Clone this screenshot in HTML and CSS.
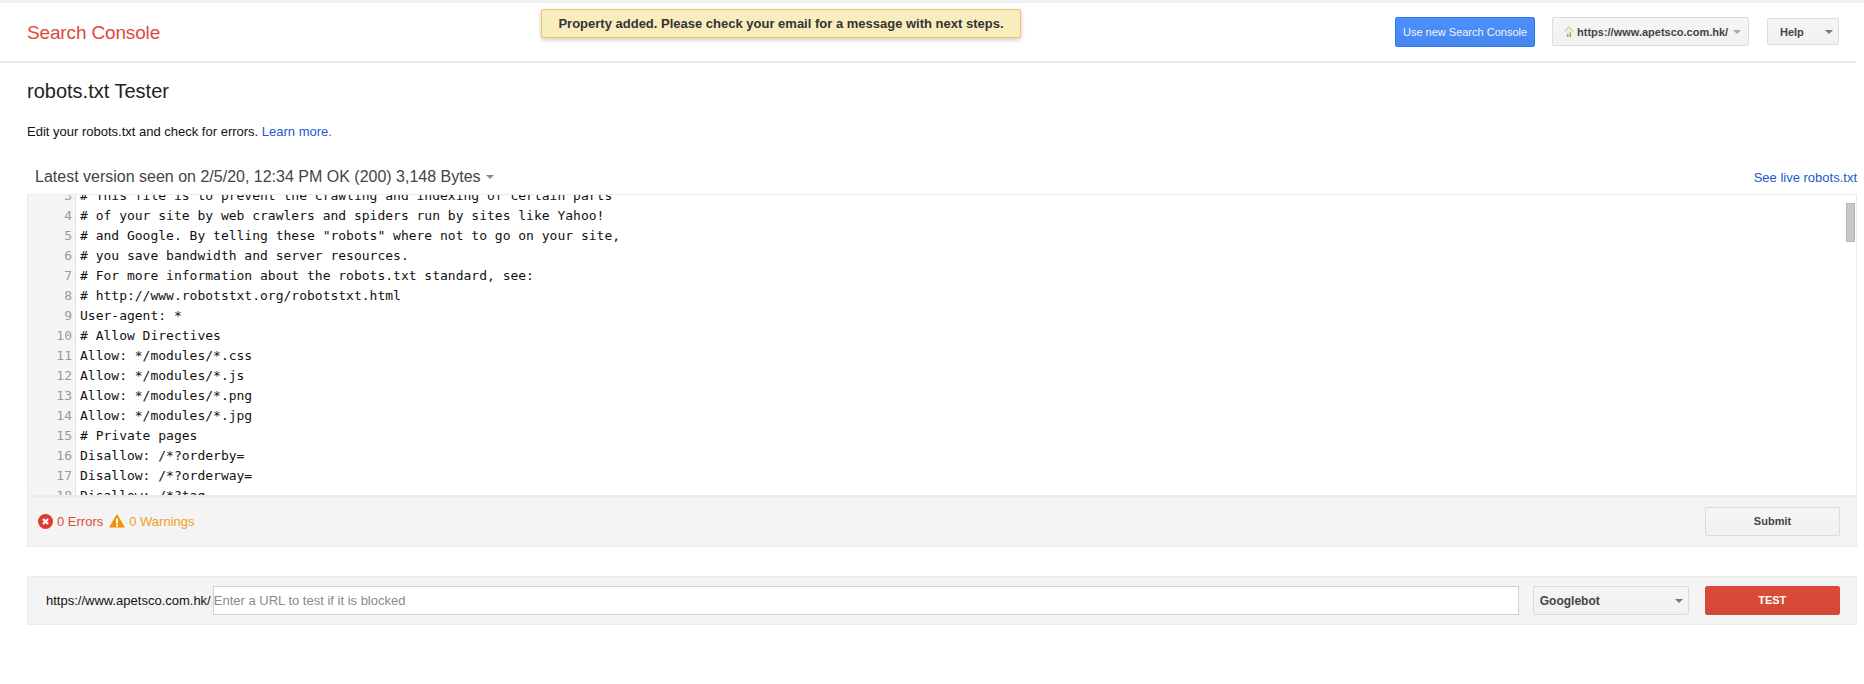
FILE: index.html
```html
<!DOCTYPE html>
<html lang="en">
<head>
<meta charset="utf-8">
<title>robots.txt Tester</title>
<link rel="stylesheet" href="styles.css">
</head>
<body>
<header class="topbar">
  <div class="brand">Search Console</div>
  <div class="notice">Property added. Please check your email for a message with next steps.</div>
  <div class="top-actions">
    <button class="btn-blue">Use new Search Console</button>
    <button class="btn-site">
      <svg class="home" width="10" height="11" viewBox="0 0 10 11"><path d="M.5 5.5 L5 1 L9.5 5.5" stroke="#b9dca4" stroke-width="1.2" fill="none"/><path d="M2 5.5V11h6V5.5L5 3Z" fill="#e4f1da"/><rect x="3" y="8" width="1.4" height="3" fill="#7dbb66"/><rect x="5.6" y="6.5" width="1.4" height="4.5" fill="#7dbb66"/></svg>
      <span>https://www.apetsco.com.hk/</span><i class="caret caret-light"></i>
    </button>
    <button class="btn-help"><span>Help</span><i class="caret"></i></button>
  </div>
</header>
<main class="page">
  <h1 class="title">robots.txt Tester</h1>
  <p class="intro">Edit your robots.txt and check for errors. <a href="#">Learn more.</a></p>
  <div class="version-row">
    <div class="version">Latest version seen on 2/5/20, 12:34 PM OK (200) 3,148 Bytes<i class="caret caret-mid"></i></div>
    <a class="live" href="#">See live robots.txt</a>
  </div>
  <section class="editor">
    <div class="code-view">
      <div class="code-lines">
        <div class="ln"><span class="no">3</span><span class="tx"># This file is to prevent the crawling and indexing of certain parts</span></div>
        <div class="ln"><span class="no">4</span><span class="tx"># of your site by web crawlers and spiders run by sites like Yahoo!</span></div>
        <div class="ln"><span class="no">5</span><span class="tx"># and Google. By telling these "robots" where not to go on your site,</span></div>
        <div class="ln"><span class="no">6</span><span class="tx"># you save bandwidth and server resources.</span></div>
        <div class="ln"><span class="no">7</span><span class="tx"># For more information about the robots.txt standard, see:</span></div>
        <div class="ln"><span class="no">8</span><span class="tx"># http://www.robotstxt.org/robotstxt.html</span></div>
        <div class="ln"><span class="no">9</span><span class="tx">User-agent: *</span></div>
        <div class="ln"><span class="no">10</span><span class="tx"># Allow Directives</span></div>
        <div class="ln"><span class="no">11</span><span class="tx">Allow: */modules/*.css</span></div>
        <div class="ln"><span class="no">12</span><span class="tx">Allow: */modules/*.js</span></div>
        <div class="ln"><span class="no">13</span><span class="tx">Allow: */modules/*.png</span></div>
        <div class="ln"><span class="no">14</span><span class="tx">Allow: */modules/*.jpg</span></div>
        <div class="ln"><span class="no">15</span><span class="tx"># Private pages</span></div>
        <div class="ln"><span class="no">16</span><span class="tx">Disallow: /*?orderby=</span></div>
        <div class="ln"><span class="no">17</span><span class="tx">Disallow: /*?orderway=</span></div>
        <div class="ln"><span class="no">18</span><span class="tx">Disallow: /*?tag</span></div>
      </div>
      <div class="scroll-thumb"></div>
    </div>
    <div class="status">
      <div class="counts">
        <svg width="15" height="15" viewBox="0 0 15 15"><circle cx="7.5" cy="7.5" r="7.5" fill="#dd3b30"/><path d="M5 5l5 5M10 5l-5 5" stroke="#fff" stroke-width="2.2"/></svg>
        <span class="err">0 Errors</span>
        <svg class="warn-icon" width="16" height="15" viewBox="0 0 16 15"><path d="M8 1L15 13H1Z" fill="#f49200" stroke="#f49200" stroke-width="1.2" stroke-linejoin="round"/><rect x="7" y="4.5" width="2" height="5" fill="#fff"/><rect x="7" y="10.5" width="2" height="2" fill="#fff"/></svg>
        <span class="warn">0 Warnings</span>
      </div>
      <button class="btn-submit">Submit</button>
    </div>
  </section>
  <section class="test-bar">
    <span class="prefix">https://www.apetsco.com.hk/</span>
    <input class="url" type="text" placeholder="Enter a URL to test if it is blocked">
    <div class="agent"><span>Googlebot</span><i class="caret"></i></div>
    <button class="btn-test">TEST</button>
  </section>
</main>
</body>
</html>
```
FILE: styles.css
```css
* { box-sizing: border-box; }
html, body { margin: 0; height: 100%; }
body {
  background: #fff;
  border-top: 3px solid #f1f1f1;
  font-family: "Liberation Sans", Arial, sans-serif;
  color: #222;
  overflow: hidden;
}
button { font-family: inherit; cursor: default; }

.caret {
  display: inline-block;
  width: 0; height: 0;
  border-left: 4px solid transparent;
  border-right: 4px solid transparent;
  border-top: 4px solid #777;
}
.caret-light { border-top-color: #aaa; }
.caret-mid { border-top-color: #888; }

.topbar {
  position: relative;
  height: 60px;
  margin-right: 8px;
  border-bottom: 2px solid #ebebeb;
  display: flex;
  align-items: center;
  justify-content: space-between;
  padding-left: 27px;
}
.brand { font-size: 19px; color: #dd4b39; letter-spacing: -.15px; margin-top: 2px; }
.notice {
  position: absolute;
  left: 541px; top: 6px;
  width: 480px; height: 29px;
  background: #f9edbe;
  border: 1px solid #f0c36d;
  border-radius: 2px;
  box-shadow: 0 2px 4px rgba(0,0,0,.2);
  font-size: 13px;
  font-weight: bold;
  color: #333;
  text-align: center;
  line-height: 27px;
}
.top-actions { display: flex; align-items: center; margin-top: -1px; margin-right: 17px; }
.btn-blue {
  width: 140px; height: 30px;
  background: linear-gradient(#4d90fe, #4787ed);
  border: 1px solid #3079ed;
  border-radius: 2px;
  color: #f0f4ff;
  font-size: 11px;
  padding: 0;
}
.btn-site {
  margin-left: 17px;
  width: 197px; height: 29px;
  background: linear-gradient(#f5f5f5, #f1f1f1);
  border: 1px solid #dcdcdc;
  border-radius: 2px;
  color: #444;
  font-size: 11px;
  font-weight: bold;
  display: flex; align-items: center;
  padding: 0 0 0 11px;
}
.btn-site span { margin-left: 3px; }
.btn-site .caret { margin-left: 5px; }
.btn-help {
  margin-left: 18px;
  width: 72px; height: 27px;
  background: linear-gradient(#f5f5f5, #f1f1f1);
  border: 1px solid #dcdcdc;
  border-radius: 2px;
  color: #444;
  font-size: 11px;
  font-weight: bold;
  display: flex; align-items: center; justify-content: space-between;
  padding: 0 5px 0 12px;
}
.page { padding: 0 7px 0 27px; }
.title { margin: 17px 0 0; font-size: 20px; font-weight: normal; color: #222; line-height: 22px; }
.intro { margin: 21px 0 0; font-size: 13px; line-height: 17px; color: #111; }
a { color: #2259cf; text-decoration: none; }
.version-row {
  margin-top: 27px;
  height: 27px;
  padding-bottom: 7px;
  display: flex;
  justify-content: space-between;
  align-items: center;
}
.version { font-size: 16px; color: #444; padding-left: 8px; }
.version .caret { margin-left: 5px; vertical-align: 3px; }
.live { font-size: 13px; }

.editor { border: 1px solid #ebebeb; width: 1830px; }
.code-view {
  position: relative;
  height: 302px;
  overflow: hidden;
  border-bottom: 2px solid #ebebeb;
}
.code-lines { margin-top: -9px; }
.ln { display: flex; height: 20px; line-height: 20px; font-family: "DejaVu Sans Mono", monospace; font-size: 13px; }
.no { flex: 0 0 48px; background: #f5f5f5; border-right: 1px solid #e3e3e3; color: #999; text-align: right; padding-right: 3px; }
.tx { padding-left: 4px; color: #111; white-space: pre; }
.scroll-thumb {
  position: absolute;
  right: 1px; top: 8px;
  width: 9px; height: 39px;
  background: #c8c8c8;
  border: 1px solid #b5b5b5;
}
.status {
  height: 49px;
  background: #f4f4f4;
  display: flex;
  align-items: center;
  justify-content: space-between;
  padding: 0 16px 0 10px;
}
.counts { display: flex; align-items: center; font-size: 13px; }
.err { color: #dd4b39; margin-left: 4px; }
.warn-icon { margin-left: 6px; }
.warn { color: #f49d1d; margin-left: 4px; }
.btn-submit {
  width: 135px; height: 29px;
  background: linear-gradient(#f5f5f5, #f1f1f1);
  border: 1px solid #dcdcdc;
  border-radius: 2px;
  color: #444;
  font-size: 11px;
  font-weight: bold;
  padding: 0 0 2px;
}
.test-bar {
  margin-top: 29px;
  width: 1830px;
  height: 49px;
  background: #f4f4f4;
  border: 1px solid #ebebeb;
  display: flex;
  align-items: center;
  padding-left: 18px;
}
.prefix { font-size: 13px; color: #111; }
.url {
  margin-left: 2px;
  width: 1306px; height: 29px;
  border: 1px solid #d0d0d0;
  background: #fff;
  padding: 0;
  font: 13px "Liberation Sans", Arial, sans-serif;
}
.url::placeholder { color: #8a8a8a; opacity: 1; }
.agent {
  margin-left: 14px;
  width: 156px; height: 29px;
  background: linear-gradient(#f5f5f5, #f1f1f1);
  border: 1px solid #dcdcdc;
  border-radius: 2px;
  color: #444;
  font-size: 12px;
  font-weight: bold;
  display: flex; align-items: center; justify-content: space-between;
  padding: 0 5px 0 6px;
}
.btn-test {
  margin-left: 16px;
  width: 135px; height: 29px;
  background: linear-gradient(#dd4b39, #d14836);
  border: 1px solid #d64937;
  border-radius: 2px;
  color: #fff;
  font-size: 11px;
  font-weight: bold;
  padding: 0 0 2px;
}
```
